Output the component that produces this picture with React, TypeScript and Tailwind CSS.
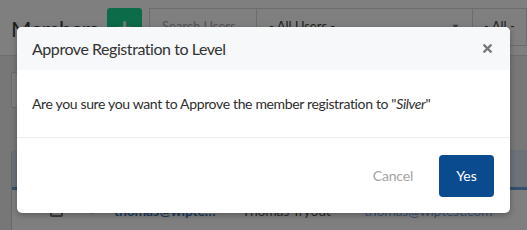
import { X } from "lucide-react"

export default function App() {
  return (
    <div className="relative h-[230px] w-[527px] overflow-hidden bg-white font-['Lato',sans-serif]">
      {/* Page behind the modal */}
      <div className="flex h-[56px] items-start border-b border-[#dcdcdc] pl-[11px] pt-[8px]">
        <h1 className="w-[96px] whitespace-nowrap pt-[3px] text-[22px] leading-[36px] tracking-[-0.6px] text-[#3e3e3e]">Members</h1>
        <button className="flex h-[38px] w-[35px] items-center justify-center rounded-[3px] bg-[#18d690] text-[24px] font-bold leading-none text-white">
          +
        </button>
        <div className="ml-[7px] flex h-[38px] w-[108px] items-center whitespace-nowrap border border-[#d8d8d8] px-[12px] text-[13px] text-[#aaa]">
          Search Users
        </div>
        <div className="flex h-[38px] w-[216px] items-center justify-between whitespace-nowrap border border-l-0 border-[#d8d8d8] px-[12px] text-[13px] text-[#444]">
          <span>- All Users -</span>
          <span className="text-[9px] text-[#777]">▼</span>
        </div>
        <div className="flex h-[38px] min-w-0 flex-1 items-center overflow-hidden whitespace-nowrap border border-l-0 border-[#d8d8d8] px-[11px] text-[13px] text-[#444]">
          - All -
        </div>
      </div>
      <div className="h-[174px] bg-[#eeeeee] pl-[11px] pt-[16px]">
        <div className="h-[36px] w-[140px] rounded-[2px] border border-[#d4d4d4] bg-white" />
        <div className="mt-[42px] h-[200px] rounded-t-[4px] border-l border-[#cfcfcf] bg-white">
          <div className="h-[40px] rounded-tl-[4px] border-b-[3px] border-[#66a0dc] bg-[#d8e4f0]" />
          <div className="flex items-center whitespace-nowrap pt-[10px] text-[14px] tracking-[-0.2px]">
            <span className="ml-[38px] h-[13px] w-[13px] rounded-[2px] border-2 border-[#777]" />
            <span className="ml-[24px] w-[27px] text-[9px] text-[#4a78b8]">▼</span>
            <span className="w-[128px] font-bold text-[#3e78be]">thomas@wipte…</span>
            <span className="w-[122px] text-[#555]">Thomas Tryout</span>
            <span className="text-[#78a6ea]">thomas@wiptest.com</span>
          </div>
        </div>
      </div>

      {/* Backdrop */}
      <div className="absolute inset-0 bg-black/50" />

      {/* Modal */}
      <div className="absolute inset-0 px-[17px] pt-[27px]">
        <div className="overflow-hidden rounded-[5px] bg-white shadow-[0_2px_6px_rgba(0,0,0,0.3)]">
          <div className="flex h-[43px] items-center justify-between bg-[#f7f8fa] pl-[15px] pr-[16px]">
            <h2 className="text-[16px] tracking-[-0.45px] text-[#333]">Approve Registration to Level</h2>
            <X className="h-[13px] w-[13px] text-[#777]" strokeWidth={4.5} />
          </div>
          <div className="flex h-[68px] items-center border-b border-[#eeeeee] px-[15px] text-[14px] tracking-[-0.35px] text-[#2e2e2e]">
            <p>
              Are you sure you want to Approve the member registration to "<i>Silver</i>"
            </p>
          </div>
          <div className="flex h-[75px] items-center justify-end gap-[26px] pr-[16px]">
            <button className="text-[14px] tracking-[-0.2px] text-[#a3a3a3]">Cancel</button>
            <button className="h-[42px] w-[55px] rounded-[4px] bg-[#0a4a8f] text-[14px] text-white">Yes</button>
          </div>
        </div>
      </div>
    </div>
  )
}
